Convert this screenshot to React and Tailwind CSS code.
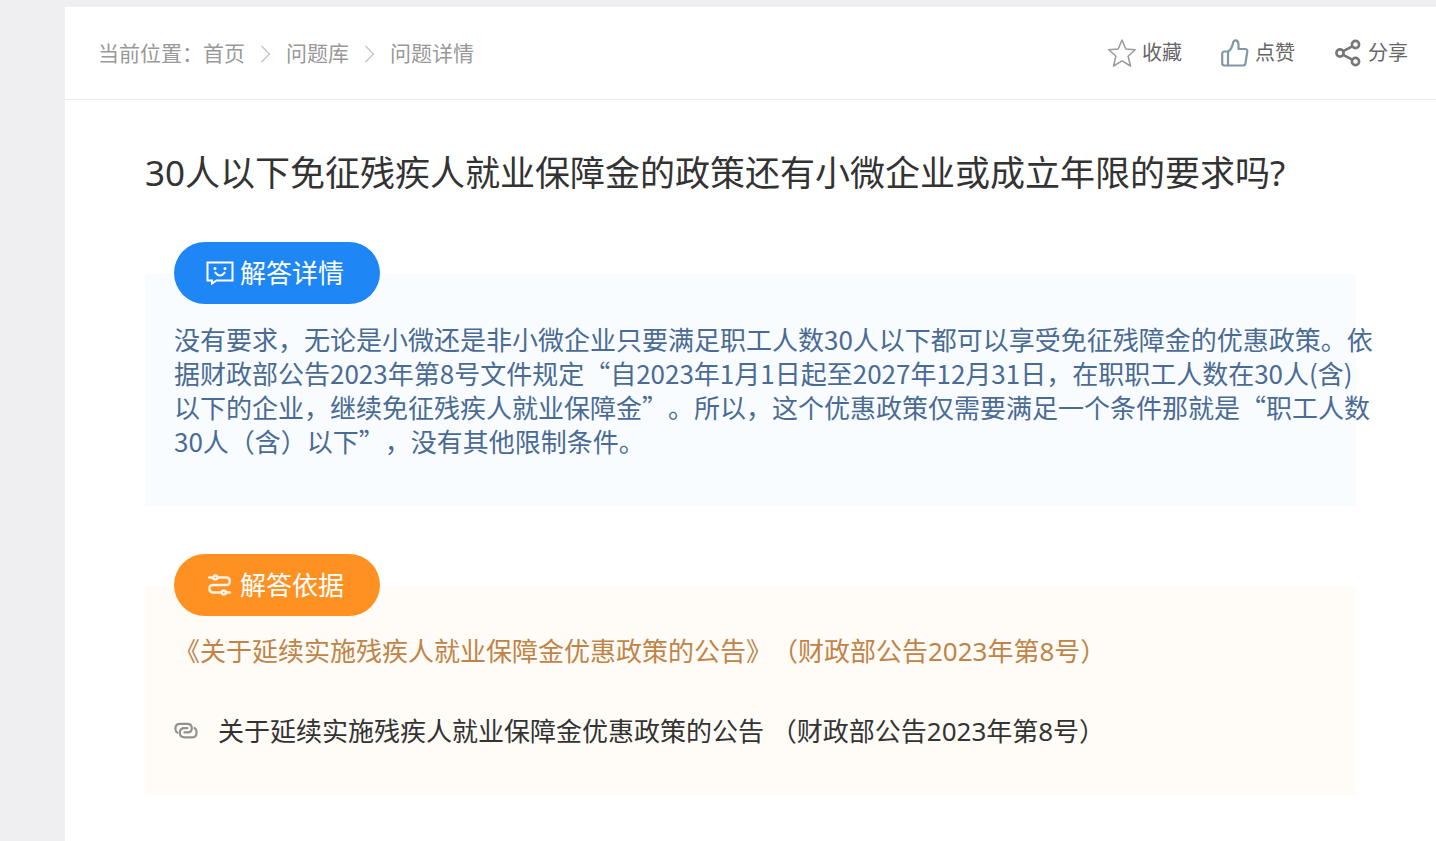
import React from 'react'

const StarIcon = () => (
    <svg width="28" height="28" viewBox="0 0 28 28" fill="none" stroke="#9a9a9a" strokeWidth="1.5" strokeLinejoin="round" aria-hidden="true">
        <path d="M14 1 L17.8 10 L27.2 10.8 L20.1 17.2 L22.5 27 L14 21.8 L5.5 27 L7.9 17.2 L0.8 10.8 L10.2 10 Z" />
    </svg>
)

const ThumbIcon = () => (
    <svg width="28" height="28" viewBox="0 0 28 28" fill="none" stroke="#7f97a6" strokeWidth="2.2" strokeLinejoin="round" strokeLinecap="round" aria-hidden="true">
        <path d="M7 12.5 H3.5 Q1.2 12.5 1.2 15 V24 Q1.2 26.5 3.5 26.5 H22 Q24 26.5 24.4 24.5 L26.3 12.5 Q26.6 10 24 10 H17.5 V5 Q17.2 1.3 14.5 1.3 Q12.6 1.3 12 4 Q10.8 10.5 7 12.5 Z" />
        <path d="M7 12.5 V26.5" />
    </svg>
)

const ShareIcon = () => (
    <svg width="28" height="28" viewBox="0 0 28 28" fill="none" stroke="#777777" strokeWidth="2.6" aria-hidden="true">
        <circle cx="6" cy="14" r="3.6" />
        <circle cx="21.5" cy="5.5" r="3.6" />
        <circle cx="21.5" cy="22.5" r="3.6" />
        <path d="M9.2 12.2 L18.3 7.3 M9.2 15.8 L18.3 20.7" />
    </svg>
)

const ChevronIcon = () => (
    <svg className="mx-[15px]" width="11" height="18" viewBox="0 0 11 18" fill="none" stroke="#c0c4cc" strokeWidth="1.4" aria-hidden="true">
        <path d="M1.5 1 L9.5 9 L1.5 17" />
    </svg>
)

const FaceIcon = () => (
    <svg width="28" height="24" viewBox="0 0 28 24" fill="none" stroke="#ffffff" strokeWidth="2" aria-hidden="true">
        <path d="M1.5 1.5 H26.5 V19.5 H10.5 L6 22.5 V19.5 H1.5 Z" />
        <path d="M9.4 11.6 Q14 17.6 18.6 11.6" strokeLinecap="round" />
        <circle cx="9" cy="7.4" r="1.5" fill="#ffffff" stroke="none" />
        <circle cx="19" cy="7.4" r="1.5" fill="#ffffff" stroke="none" />
    </svg>
)

const RouteIcon = () => (
    <svg width="28" height="24" viewBox="0 0 28 24" fill="none" stroke="#fff3e4" strokeWidth="2.4" strokeLinecap="round" aria-hidden="true">
        <path d="M3.2 4.5 H7 M11.6 4.5 H20 Q23.8 4.5 23.8 8.2 Q23.8 12 20 12 H7.2 Q3.4 12 3.4 15.6 Q3.4 19.5 7.2 19.5 H15.6 M20 19.5 H24" />
        <circle cx="9.3" cy="4.5" r="2" />
        <circle cx="17.8" cy="19.5" r="2" />
    </svg>
)

const LinkIcon = () => (
    <svg width="24" height="18" viewBox="0 0 24 18" fill="none" stroke="#929290" strokeWidth="2.2" strokeLinecap="round" aria-hidden="true">
        <path d="M3.4 10.6 Q1.4 9.4 1.4 6.4 Q1.4 1.8 6 1.8 H13 Q17.8 1.8 17.8 6 Q17.8 10.4 13.6 10.4 H10.4" />
        <path d="M20.6 6 Q22.6 7.2 22.6 10.4 Q22.6 15.4 17.6 15.4 H10.8 Q5.8 15.4 5.8 10.8 Q5.8 6.2 10.4 6.2 H13.4" />
    </svg>
)

const actions = [
    { label: '收藏', Icon: StarIcon },
    { label: '点赞', Icon: ThumbIcon },
    { label: '分享', Icon: ShareIcon },
]

const Panel = ({ title, Icon, pillClass, className, children }) => (
    <section className={`flex flex-col items-start pl-[29px] pb-12 ${className}`}>
        <h2 className={`-mt-8 mb-[18px] flex h-[62px] w-[206px] items-center justify-center gap-[6px] rounded-full pr-1 text-[26px] leading-[34px] text-white ${pillClass}`}>
            <Icon />
            {title}
        </h2>
        {children}
    </section>
)

const App = () => {
    return (
        <div className="min-h-screen bg-[#efeff1] pl-[65px] pt-[7px] font-['Noto_Sans','Noto_Sans_CJK_SC',sans-serif] font-normal [text-spacing-trim:space-all]" lang="zh-CN">
            <main className="min-h-[calc(100vh-7px)] bg-white">
                <header className="flex h-[93px] items-center justify-between border-b border-[#ebebeb] pl-[33px] pr-7">
                    <nav className="flex items-center pt-0.5 text-[21px] text-[#999999]" aria-label="当前位置">
                        <span>当前位置：</span>
                        <a href="#home">首页</a>
                        <ChevronIcon />
                        <a href="#questions">问题库</a>
                        <ChevronIcon />
                        <span>问题详情</span>
                    </nav>
                    <div className="flex items-center gap-[39px] text-[20px] text-[#666666]">
                        {actions.map(({ label, Icon }) => (
                            <button key={label} type="button" className="flex items-center gap-[6px]">
                                <Icon />
                                {label}
                            </button>
                        ))}
                    </div>
                </header>

                <article className="flex flex-col px-20 pt-[49px]">
                    <h1 className="whitespace-nowrap text-[35px] leading-[48px] text-[#333333]">
                        30人以下免征残疾人就业保障金的政策还有小微企业或成立年限的要求吗?
                    </h1>

                    <Panel title="解答详情" Icon={FaceIcon} pillClass="bg-[#1e87f5]" className="mt-[77px] bg-[#f8fcff]">
                        {/* CJK font first so the quote marks stay full width */}
                        <p className="whitespace-nowrap font-['Noto_Sans_CJK_SC',sans-serif] text-[26px] leading-[34px] text-[#4b6b94]">
                            没有要求，无论是小微还是非小微企业只要满足职工人数30人以下都可以享受免征残障金的优惠政策。依<br />
                            据财政部公告2023年第8号文件规定“自2023年1月1日起至2027年12月31日，在职职工人数在30人(含)<br />
                            以下的企业，继续免征残疾人就业保障金”。所以，这个优惠政策仅需要满足一个条件那就是“职工人数<br />
                            30人（含）以下”，没有其他限制条件。
                        </p>
                    </Panel>

                    <Panel title="解答依据" Icon={RouteIcon} pillClass="bg-[#ff9122]" className="mt-20 bg-[#fffcf7]">
                        <p className="whitespace-nowrap text-[26px] leading-[34px] text-[#c08448]">
                            《关于延续实施残疾人就业保障金优惠政策的公告》（财政部公告2023年第8号）
                        </p>
                        <a href="#notice" className="mt-[46px] flex items-center gap-5 whitespace-nowrap text-[26px] leading-[34px] text-[#333333]">
                            <LinkIcon />
                            关于延续实施残疾人就业保障金优惠政策的公告 （财政部公告2023年第8号）
                        </a>
                    </Panel>
                </article>
            </main>
        </div>
    )
}

export default App
